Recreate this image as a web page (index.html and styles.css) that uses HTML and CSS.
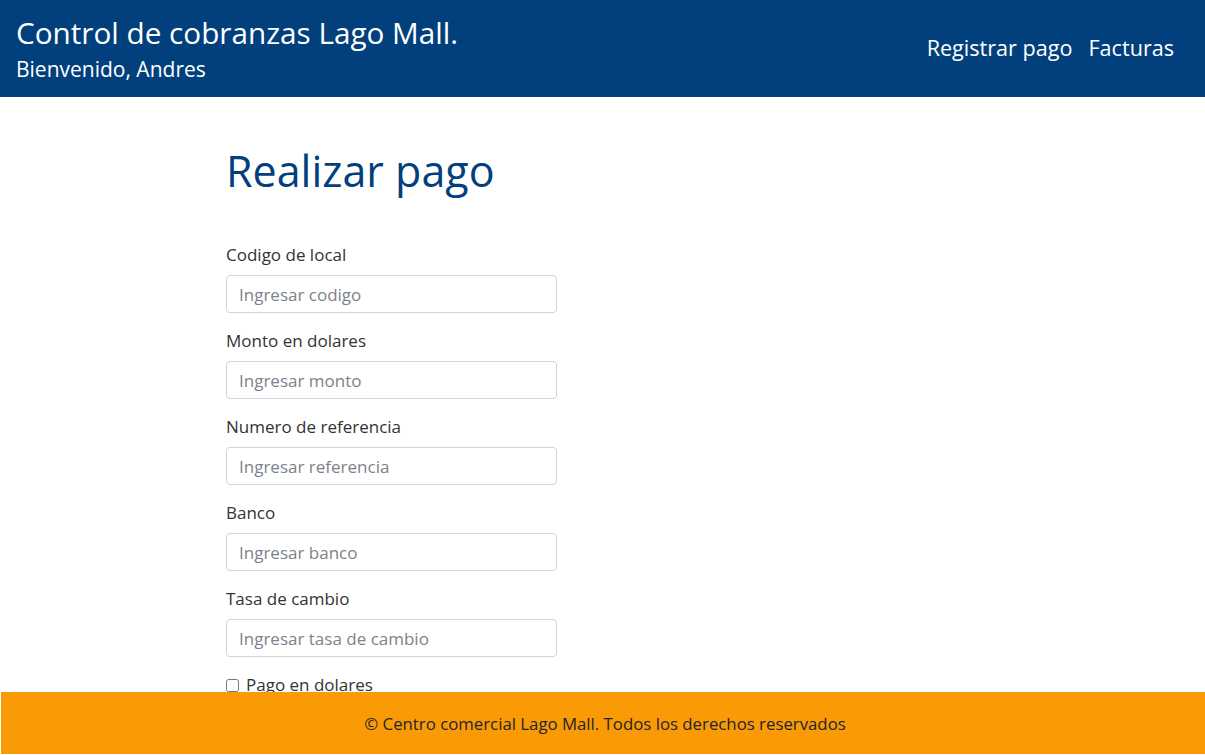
FILE: index.html
```html
<!DOCTYPE html>
<html lang="es">
<head>
<meta charset="utf-8">
<title>Control de cobranzas Lago Mall.</title>
<link rel="stylesheet" href="styles.css">
</head>
<body>
<header class="topbar">
  <div class="brand">
    <div class="brand-title">Control de cobranzas Lago Mall.</div>
    <div class="brand-sub">Bienvenido, Andres</div>
  </div>
  <nav class="nav">
    <a class="nav-link" href="#">Registrar pago</a>
    <a class="nav-link" href="#">Facturas</a>
  </nav>
</header>
<main class="content">
  <h1 class="page-title">Realizar pago</h1>
  <form class="pay-form">
    <div class="form-group">
      <label class="form-label">Codigo de local</label>
      <input class="form-control" type="text" placeholder="Ingresar codigo">
    </div>
    <div class="form-group">
      <label class="form-label">Monto en dolares</label>
      <input class="form-control" type="text" placeholder="Ingresar monto">
    </div>
    <div class="form-group">
      <label class="form-label">Numero de referencia</label>
      <input class="form-control" type="text" placeholder="Ingresar referencia">
    </div>
    <div class="form-group">
      <label class="form-label">Banco</label>
      <input class="form-control" type="text" placeholder="Ingresar banco">
    </div>
    <div class="form-group">
      <label class="form-label">Tasa de cambio</label>
      <input class="form-control" type="text" placeholder="Ingresar tasa de cambio">
    </div>
    <div class="form-check">
      <input class="check-input" type="checkbox" id="usd">
      <label class="check-label" for="usd">Pago en dolares</label>
    </div>
  </form>
</main>
<footer class="footer">© Centro comercial Lago Mall. Todos los derechos reservados</footer>
</body>
</html>
```
FILE: styles.css
```css
* { box-sizing: border-box; }
html, body { margin: 0; padding: 0; }
body {
  font-family: "Open Sans", "Liberation Sans", sans-serif;
  color: #212529;
  background: #fff;
  height: 755px;
  overflow: hidden;
}
.topbar {
  background: #023f7d;
  height: 97px;
  display: flex;
  justify-content: space-between;
  align-items: flex-start;
  padding: 0 31px 0 16px;
  color: #fff;
}
.brand { padding-top: 14px; }
.brand-title { font-size: 29.7px; line-height: 38px; }
.brand-sub { font-size: 21px; line-height: 28px; margin-top: 3px; }
.nav { display: flex; gap: 16px; padding-top: 34px; }
.nav-link { color: #fff; text-decoration: none; font-size: 21.6px; line-height: 28px; }
.content { width: 331px; margin-left: 226px; padding-top: 50px; }
.page-title {
  margin: 0 0 48px;
  font-weight: 400;
  font-size: 43px;
  line-height: 48px;
  color: #023f7d;
}
.form-group { margin-bottom: 16px; }
.form-label {
  display: block;
  font-size: 17px;
  line-height: 24px;
  margin-bottom: 8px;
  color: #333;
}
.form-control {
  display: block;
  width: 331px;
  height: 38px;
  padding: 6px 12px;
  font-family: inherit;
  font-size: 17px;
  border: 1px solid #ced4da;
  border-radius: 4px;
  color: #495057;
}
.form-control::placeholder { color: #7d828a; }
.form-check { display: flex; align-items: center; gap: 7px; margin-top: 0; }
.check-input { width: 13px; height: 13px; margin: 0; }
.check-label { font-size: 17px; line-height: 24px; color: #333; }
.footer {
  position: fixed;
  left: 1px;
  right: 0;
  bottom: 1px;
  height: 62px;
  background: #fa9b06;
  color: #212529;
  font-size: 16.8px;
  display: flex;
  align-items: center;
  justify-content: center;
  padding-left: 4px;
}
```
